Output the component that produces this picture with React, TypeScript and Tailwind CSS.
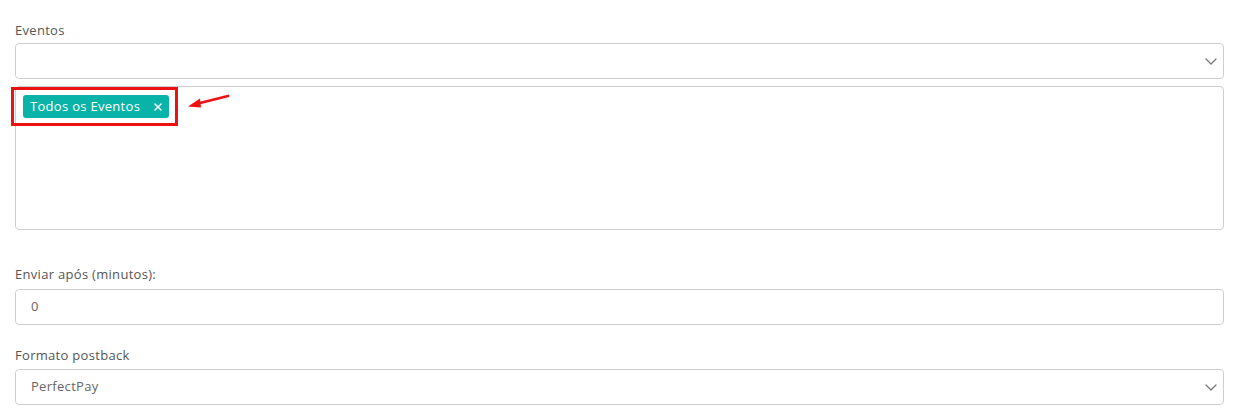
import { X } from "lucide-react";

const font = { fontFamily: '"Open Sans", "Liberation Sans", sans-serif' };

function Label({ children }: { children: React.ReactNode }) {
  return <div className="text-[13px] leading-[18px] tracking-[0.3px] text-[#555]">{children}</div>;
}

function Chevron() {
  return (
    <svg width="12" height="7" viewBox="0 0 12 7" fill="none">
      <path d="M1 1l5 5 5-5" stroke="#777" strokeWidth="1.3" strokeLinecap="round" strokeLinejoin="round" />
    </svg>
  );
}

function SelectBox({ value }: { value?: string }) {
  return (
    <div className="h-[36px] border border-[#cfcfcf] rounded-[4px] bg-white flex items-center justify-between pl-[15px] pr-[6px]">
      <span className="text-[13px] tracking-[0.3px] text-[#666]">{value ?? ""}</span>
      <Chevron />
    </div>
  );
}

export default function App() {
  return (
    <div className="w-[1236px] h-[418px] bg-white pl-[15px] pr-[12px] pt-[21px]" style={font}>
      <Label>Eventos</Label>
      <div className="mt-[4px]">
        <SelectBox />
      </div>

      <div className="relative mt-[7px] h-[144px] border border-[#cfcfcf] rounded-[4px] bg-white pl-[7px] pt-[6px]">
        <div className="inline-flex items-center h-[23px] rounded-[3px] bg-[#0ab3a8] text-white text-[13px] tracking-[0.3px] pl-[7px] pr-[5px] gap-[12px]">
          <span>Todos os Eventos</span>
          <X size={12} strokeWidth={3} />
        </div>
        {/* annotation */}
        <div className="absolute left-[-5px] top-[0px] w-[167px] h-[39px] border-[3px] border-[#ee1111]" />
        <svg className="absolute left-[170px] top-[4px]" width="48" height="20" viewBox="0 0 48 20">
          <line x1="42" y1="5" x2="12" y2="12.5" stroke="#ee1111" strokeWidth="2.8" strokeLinecap="round" />
          <polygon points="2,15.5 14,7.5 15,16.5" fill="#ee1111" />
        </svg>
      </div>

      <div className="mt-[35px]">
        <Label>Enviar após (minutos):</Label>
      </div>
      <div className="mt-[6px] h-[36px] border border-[#cfcfcf] rounded-[4px] bg-white flex items-center pl-[15px]">
        <span className="text-[13px] text-[#666]">0</span>
      </div>

      <div className="mt-[21px]">
        <Label>Formato postback</Label>
      </div>
      <div className="mt-[5px]">
        <SelectBox value="PerfectPay" />
      </div>
    </div>
  );
}
